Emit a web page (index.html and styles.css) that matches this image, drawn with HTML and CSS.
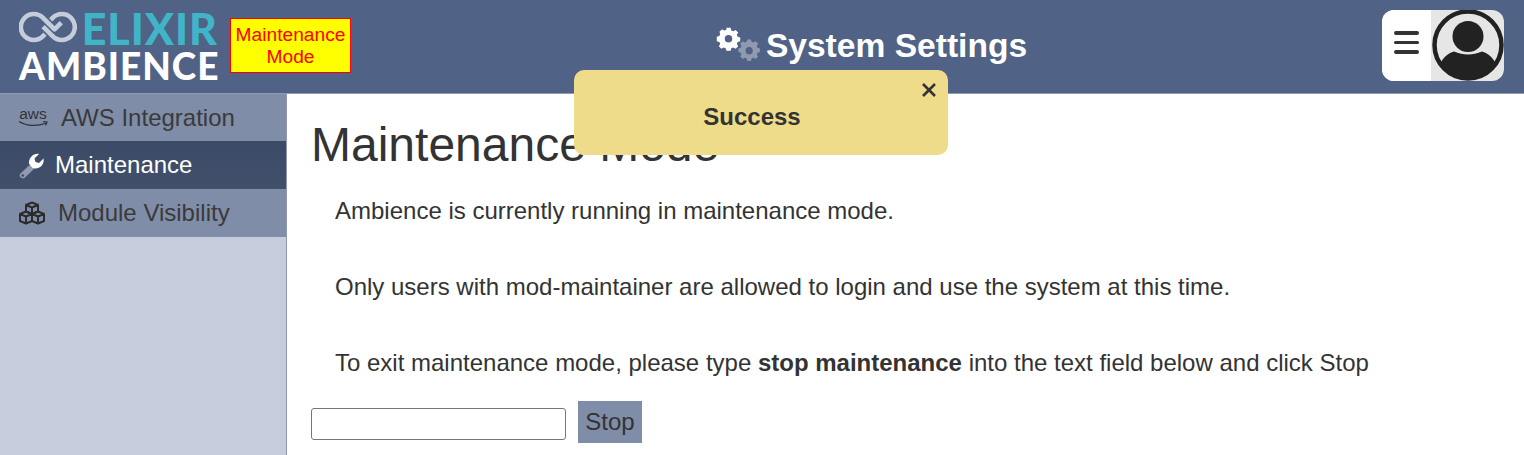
FILE: index.html
```html
<!DOCTYPE html>
<html lang="en">
<head>
    <meta charset="UTF-8">
    <title>System Settings</title>
    <link rel="stylesheet" href="styles.css">
</head>
<body>
    <header class="topbar">
        <div class="brand">
            <div class="logo">
                <div class="logoTop">
                    <svg class="logoMark" viewBox="0 0 60 32" width="60" height="32">
                        <g fill="none" stroke="#c5ccdb" stroke-width="4.800" stroke-linejoin="round">
                            <path d="M27 23.500 L25 25.500 A13.500 13.500 0 1 1 25 6.500 L37 18.500 L44 11.500"/>
                            <path d="M33 8.500 L35 6.500 A13.500 13.500 0 1 1 35 25.500 L25 15.500"/>
                        </g>
                    </svg>
                    <span class="logoElixir">ELIXIR</span>
                </div>
                <div class="logoAmbience">AMBIENCE</div>
            </div>
            <div class="modeBadge">Maintenance Mode</div>
        </div>
        <div class="pageTitle">
            <svg class="titleIcon" viewBox="0 0 44 44" width="44" height="44">
                <path fill="#ffffff" fill-rule="evenodd" d="M9.500 1h5l.8 3 2.400 1 2.700-1.600 3 3-1.600 2.700 1 2.400 3 .8v4.400l-3 .8-1 2.400 1.600 2.700-3 3-2.700-1.600-2.400 1-.8 3h-5l-.8-3-2.400-1-2.700 1.600-3-3 1.600-2.700-1-2.400-3-.8V11.500l3-.8 1-2.400L1.400 5.600l3-3 2.700 1.600 2.400-1z M12 9.300a4.400 4.400 0 1 0 0 8.800 4.400 4.400 0 0 0 0-8.800z" transform="translate(2.300 3) scale(.85)"/>
                <path fill="#8f9ab1" fill-rule="evenodd" d="M29.500 19h4l.7 2.700 2 .8 2.400-1.400 2.800 2.800-1.400 2.400.8 2 2.700.7v4l-2.700.7-.8 2 1.400 2.400-2.800 2.800-2.400-1.400-2 .8-.7 2.700h-4l-.7-2.700-2-.8-2.400 1.400-2.800-2.800 1.400-2.400-.8-2-2.700-.7v-4l2.700-.7.8-2-1.400-2.400 2.800-2.800 2.400 1.400 2-.8z M31.500 27.500a4 4 0 1 0 0 8 4 4 0 0 0 0-8z" transform="translate(4.800 -1.700) scale(.9)"/>
            </svg>
            <h2>System Settings</h2>
        </div>
        <div class="userBox">
            <div class="menuBtn">
                <span></span>
                <span></span>
                <span></span>
            </div>
            <div class="avatar">
                <svg viewBox="0 0 72 72" width="72" height="72">
                    <defs>
                        <clipPath id="avatarClip"><circle cx="36" cy="36" r="34"/></clipPath>
                    </defs>
                    <circle cx="36" cy="36" r="33.500" fill="#e6e6e6" stroke="#222222" stroke-width="4.500"/>
                    <g clip-path="url(#avatarClip)" fill="#222222">
                        <circle cx="36" cy="27.500" r="15.500"/>
                        <path d="M4 72 V62 C9 51 14 45 22 42.500 C27 44.500 31 45.500 36 45.500 C41 45.500 45 44.500 50 42.500 C58 45 63 51 68 62 V72 Z"/>
                    </g>
                </svg>
            </div>
        </div>
    </header>

    <div class="mainArea">
        <nav class="sidebar">
            <a class="navItem">
                <svg class="awsIcon" viewBox="0 0 32 24" width="32" height="24">
                    <path d="M1 15.500 C9 20.500 20 20.500 28 17 M25 15.500 L29 16 L27.500 19.500" fill="none" stroke="#333333" stroke-width="1.200"/>
                    <text x="15" y="12.500" text-anchor="middle" class="awsText">aws</text>
                </svg>
                <span>AWS Integration</span>
            </a>
            <a class="navItem navActive">
                <svg class="wrenchIcon" viewBox="0 0 26 26" width="26" height="26">
                    <path d="M2 21 L13 10.500 L17 15 L6.500 25 C4 26.500 .5 23.500 2 21 Z" fill="#8f9ab1"/>
                    <circle cx="4.800" cy="22.500" r="1.300" fill="#3e4c67"/>
                    <path d="M21 1 L16.500 5.500 L17.500 9 L21 10 L25.500 5.500 C26.500 10.500 23 15.500 17.500 15.500 C16.500 15.500 15.500 15.200 14.500 15 L11 10.500 C10.500 5 15.500 0 21 1 Z" fill="#ffffff"/>
                </svg>
                <span>Maintenance</span>
            </a>
            <a class="navItem navModules">
                <svg class="cubesIcon" viewBox="0 0 28 24" width="28" height="24">
                    <g fill="none" stroke="#2b2b2b" stroke-width="2" stroke-linejoin="round">
                        <path d="M14 1.500 L20 4 V10.500 L14 13 L8 10.500 V4 Z M8 4 L14 6.500 L20 4 M14 6.500 V13"/>
                        <path d="M8 10.500 L14 13 V20 L8 22.500 L2 20 V13 Z M2 13 L8 15.500 L14 13 M8 15.500 V22.500"/>
                        <path d="M20 10.500 L26 13 V20 L20 22.500 L14 20 V13 Z M14 13 L20 15.500 L26 13 M20 15.500 V22.500"/>
                    </g>
                </svg>
                <span>Module Visibility</span>
            </a>
        </nav>
        <main class="content">
            <h1>Maintenance Mode</h1>
            <p>Ambience is currently running in maintenance mode.</p>
            <p>Only users with mod-maintainer are allowed to login and use the system at this time.</p>
            <p>To exit maintenance mode, please type <b>stop maintenance</b> into the text field below and click Stop</p>
            <div class="stopRow">
                <input class="stopInput" type="text">
                <button class="stopBtn">Stop</button>
            </div>
        </main>
    </div>

    <div class="toast">
        <svg class="toastClose" viewBox="0 0 16 16" width="16" height="16">
            <path d="M2 2 L14 14 M14 2 L2 14" stroke="#333333" stroke-width="2.600" fill="none"/>
        </svg>
        <span>Success</span>
    </div>
</body>
</html>
```

FILE: styles.css
```css
*{
    margin: 0;
    padding: 0;
    box-sizing: border-box;
}
html,body{
    height: 455px;
    overflow: hidden;
}
body{
    font-family: "Liberation Sans", Arial, sans-serif;
    color: #333333;
    background-color: #ffffff;
}
.topbar{
    height: 94px;
    background-color: #506285;
    border-bottom: 1px solid #8f9ab1;
    display: flex;
    align-items: center;
    justify-content: space-between;
    padding: 0 20px 0 19px;
}
.brand{
    display: flex;
    align-items: center;
    gap: 12px;
    width: 333px;
    margin-top: -3px;
}
.logo{
    width: 199px;
    font-family: "Lato", "Liberation Sans", sans-serif;
    font-weight: 700;
    line-height: 1;
    margin-top: 3px;
}
.logoTop{
    display: flex;
    align-items: center;
    height: 36px;
    margin-top: 2px;
}
.logoMark{
    margin-top: -7px;
}
.logoElixir{
    font-size: 43px;
    font-weight: 900;
    color: #40b5c8;
    letter-spacing: 1px;
    line-height: 36px;
    margin-left: 5px;
    margin-top: -4px;
}
.logoAmbience{
    font-size: 37px;
    font-weight: 900;
    color: #ffffff;
    letter-spacing: 1px;
    line-height: 34px;
    white-space: nowrap;
}
.modeBadge{
    width: 121px;
    height: 55px;
    margin-top: 1px;
    padding: 5px 0 0;
    border: 1px solid #ff0000;
    background-color: #ffff00;
    color: #ff0000;
    font-size: 19.2px;
    line-height: 22px;
    text-align: center;
}
.pageTitle{
    display: flex;
    align-items: center;
    gap: 6px;
    margin-left: 9px;
    margin-top: -2px;
}
.pageTitle h2{
    font-size: 33.6px;
    font-weight: 700;
    color: #ffffff;
    line-height: 40px;
}
.userBox{
    width: 122px;
    height: 71px;
    border-radius: 12px;
    overflow: hidden;
    display: flex;
    margin-top: -3px;
    background-color: #e6e6e6;
}
.menuBtn{
    width: 49px;
    background-color: #ffffff;
    display: flex;
    flex-direction: column;
    justify-content: center;
    align-items: center;
    gap: 6px;
    padding-bottom: 5px;
    padding-right: 1px;
}
.menuBtn span{
    width: 25px;
    height: 3.500px;
    background-color: #333333;
    border-radius: 2px;
}
.avatar{
    flex: 1;
    display: flex;
    align-items: center;
    justify-content: center;
}
.mainArea{
    display: flex;
    height: 361px;
}
.sidebar{
    width: 287px;
    flex-shrink: 0;
    background-color: #c5ccdb;
    border-right: 1px solid #8f9ab1;
}
.navItem{
    height: 47px;
    display: flex;
    align-items: center;
    gap: 11px;
    padding-left: 18px;
    background-color: #808da8;
    font-size: 24px;
    color: #3a3a3a;
}
.navActive{
    height: 48px;
    gap: 11px;
    background: linear-gradient(#3b4a66, #42506c);
    color: #ffffff;
}
.navModules{
    height: 48px;
    gap: 12px;
}
.awsText{
    font-family: "Liberation Sans", sans-serif;
    font-size: 15.5px;
    fill: #333333;
}
.wrenchIcon{
    margin-top: 1px;
}
.content{
    flex: 1;
    padding: 23px 24px 0 24px;
}
.content h1{
    font-size: 48px;
    font-weight: 400;
    line-height: 56px;
    margin-bottom: 23px;
}
.content p{
    font-size: 24px;
    line-height: 30px;
    padding-left: 24px;
    margin-bottom: 46px;
}
.stopRow{
    display: flex;
    align-items: center;
    gap: 12px;
    margin-top: -23px;
}
.stopInput{
    width: 255px;
    height: 32px;
    margin-top: 4px;
    border: 1px solid #767676;
    border-radius: 3px;
    background-color: #ffffff;
}
.stopBtn{
    width: 64px;
    height: 42px;
    border: none;
    background-color: #808da8;
    color: #333333;
    font-family: "Liberation Sans", Arial, sans-serif;
    font-size: 24px;
}
.toast{
    position: absolute;
    left: 574px;
    top: 70px;
    width: 374px;
    height: 85px;
    border-radius: 10px;
    background-color: #eedc8a;
    display: flex;
    align-items: center;
    justify-content: center;
    font-size: 24px;
    font-weight: 700;
    padding-top: 9px;
    padding-right: 18px;
}
.toastClose{
    position: absolute;
    top: 12px;
    right: 11px;
}
```
